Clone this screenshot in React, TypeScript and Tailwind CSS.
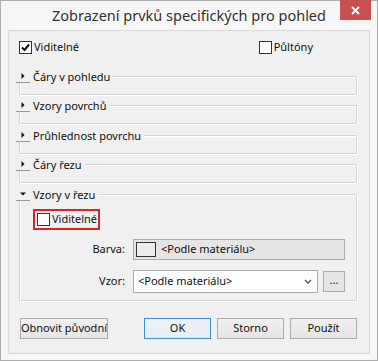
import React from "react"

const font = "font-['Noto_Sans','Open_Sans',sans-serif]"

const Check = ({ checked }: { checked?: boolean }) => (
  <span className="flex h-[13px] w-[13px] shrink-0 items-center justify-center border border-[#333] bg-white">
    {checked && (
      <svg width="11" height="11" viewBox="0 0 11 11">
        <path d="M2 5.5 L4.5 8 L9 2.5" fill="none" stroke="#111" strokeWidth="2" />
      </svg>
    )}
  </span>
)

const Toggle = ({ open }: { open?: boolean }) => (
  <span className="flex h-[13px] w-[14px] items-center justify-center border-b border-[#9a9a9a]">
    {open ? (
      <svg width="8" height="8" viewBox="0 0 8 8">
        <path d="M1 2.5 H7 L4 5.5 Z" fill="#111" />
      </svg>
    ) : (
      <svg width="8" height="8" viewBox="0 0 8 8">
        <path d="M2.5 1 V7 L5.5 4 Z" fill="#111" />
      </svg>
    )}
  </span>
)

const Group = ({
  title,
  open,
  className,
  children,
}: {
  title: string
  open?: boolean
  className: string
  children?: React.ReactNode
}) => (
  <div
    className={`relative border border-[#d5d5d5] shadow-[1px_1px_0_#fff,inset_1px_1px_0_#fff] ${className}`}
  >
    <div className="absolute left-[-4px] top-[-7px] flex items-center gap-[3px] bg-[#f0f0f0] pr-[3px] leading-[13px]">
      <Toggle open={open} />
      <span>{title}</span>
    </div>
    {children}
  </div>
)

const Button = ({ label, className }: { label: string; className: string }) => (
  <button
    className={`flex h-[21px] items-center justify-center whitespace-nowrap border bg-gradient-to-b from-[#f0f0f0] to-[#e5e5e5] text-[11px] ${className}`}
  >
    {label}
  </button>
)

export default function App() {
  return (
    <div
      className={`flex h-[361px] w-[378px] flex-col border border-[#aeaeae] bg-[#f6f6f6] text-[11px] text-[#111] ${font}`}
    >
      <div className="relative flex h-[29px] items-center justify-center">
        <span className="text-[14.5px] text-[#333]">Zobrazení prvků specifických pro pohled</span>
        <div className="absolute right-[6px] top-[-1px] flex h-[20px] w-[31px] items-center justify-center bg-[#c75050]">
          <svg width="9" height="9" viewBox="0 0 9 9">
            <path d="M1 1 L8 8 M8 1 L1 8" stroke="#fff" strokeWidth="1.8" />
          </svg>
        </div>
      </div>

      <div className="mx-[7px] flex h-[324px] flex-col border border-[#d9d9d9] bg-[#f0f0f0] pt-[10px]">
        <div className="flex h-[13px] items-center pl-[10px] pr-[12px]">
          <label className="flex items-center gap-[2px]">
            <Check checked />
            <span>Viditelné</span>
          </label>
          <label className="ml-auto mr-[44px] flex items-center gap-[2px]">
            <Check />
            <span>Půltóny</span>
          </label>
        </div>

        <div className="ml-[10px] mr-[12px] flex flex-col">
          <Group title="Čáry v pohledu" className="mt-[22px] h-[19px]" />
          <Group title="Vzory povrchů" className="mt-[10px] h-[19px]" />
          <Group title="Průhlednost povrchu" className="mt-[11px] h-[19px]" />
          <Group title="Čáry řezu" className="mt-[10px] h-[19px]" />
          <Group title="Vzory v řezu" open className="mt-[11px] h-[107px]">
            <div className="flex flex-col pl-[13px] pr-[11px] pt-[14px]">
              <label className="flex h-[21px] w-[67px] items-center gap-[2px] border-2 border-[#d9232a] pl-[2px]">
                <Check />
                <span>Viditelné</span>
              </label>
              <div className="mt-[9px] grid grid-cols-[92px_1fr] items-center gap-x-[8px] gap-y-[10px]">
                <span className="text-right">Barva:</span>
                <button className="flex h-[21px] items-center gap-[5px] border border-[#adadad] bg-[#e5e5e5] pl-[2px] text-[11px]">
                  <span className="h-[15px] w-[20px] border border-[#333] bg-[#ececec]" />
                  <span>&lt;Podle materiálu&gt;</span>
                </button>
                <span className="text-right">Vzor:</span>
                <div className="flex items-center gap-[5px]">
                  <div className="flex h-[23px] flex-1 items-center border border-[#acacac] bg-white pl-[4px] pr-[5px]">
                    <span>&lt;Podle materiálu&gt;</span>
                    <svg className="ml-auto" width="8" height="6" viewBox="0 0 8 6">
                      <path d="M1 1 L4 4 L7 1" fill="none" stroke="#555" strokeWidth="1.4" />
                    </svg>
                  </div>
                  <button className="flex h-[21px] w-[22px] items-center justify-center border border-[#adadad] bg-[#e5e5e5] pb-[3px] text-[11px]">
                    ...
                  </button>
                </div>
              </div>
            </div>
          </Group>
        </div>

        <div className="mt-[17px] flex items-center pl-[11px] pr-[12px]">
          <Button label="Obnovit původní" className="w-[88px] border-[#acacac]" />
          <div className="ml-auto flex gap-[6px]">
            <Button label="OK" className="w-[67px] border-[#3c8fdf] from-[#eaf3fb] to-[#e5eef8]" />
            <Button label="Storno" className="w-[67px] border-[#acacac]" />
            <Button label="Použít" className="w-[67px] border-[#acacac]" />
          </div>
        </div>
      </div>
    </div>
  )
}
